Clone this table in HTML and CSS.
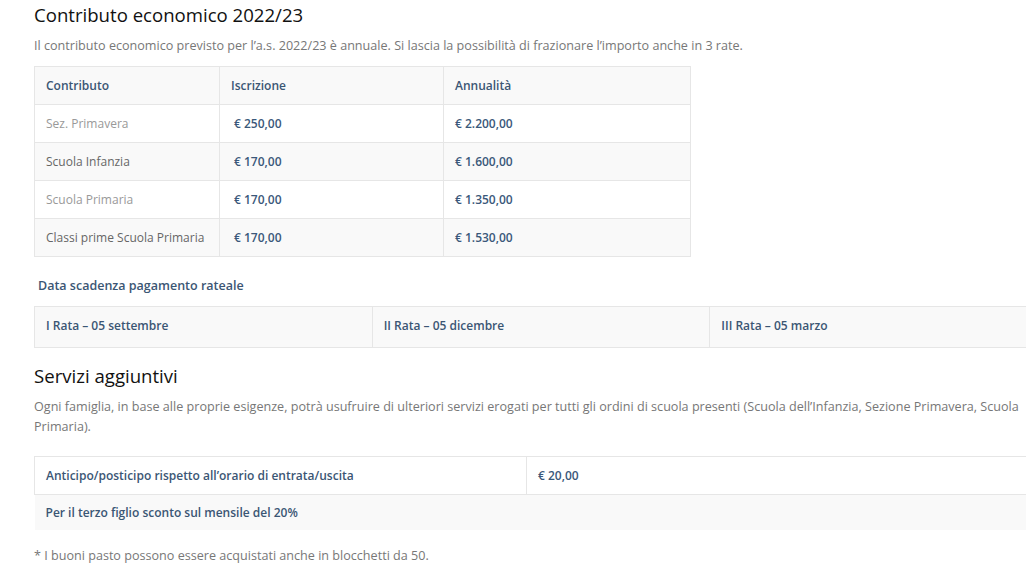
FILE: index.html
```html
<!DOCTYPE html>
<html lang="it">
<head>
<meta charset="UTF-8">
<meta name="viewport" content="width=device-width, initial-scale=1.0">
<title>Contributo economico 2022/23</title>
<link rel="stylesheet" href="styles.css">
</head>
<body>
<div class="content">
  <h2>Contributo economico 2022/23</h2>
  <p>Il contributo economico previsto per l’a.s. 2022/23 è annuale. Si lascia la possibilità di frazionare l’importo anche in 3 rate.</p>

  <table class="fees">
    <tr class="head">
      <td class="c1">Contributo</td>
      <td class="c2">Iscrizione</td>
      <td class="c3">Annualità</td>
    </tr>
    <tr>
      <td class="name light">Sez. Primavera</td>
      <td class="price fee">€ 250,00</td>
      <td class="price">€ 2.200,00</td>
    </tr>
    <tr>
      <td class="name">Scuola Infanzia</td>
      <td class="price fee">€ 170,00</td>
      <td class="price">€ 1.600,00</td>
    </tr>
    <tr>
      <td class="name light">Scuola Primaria</td>
      <td class="price fee">€ 170,00</td>
      <td class="price">€ 1.350,00</td>
    </tr>
    <tr>
      <td class="name">Classi prime Scuola Primaria</td>
      <td class="price fee">€ 170,00</td>
      <td class="price">€ 1.530,00</td>
    </tr>
  </table>

  <h4>Data scadenza pagamento rateale</h4>
  <table class="rates">
    <tr>
      <td>I Rata – 05 settembre</td>
      <td>II Rata – 05 dicembre</td>
      <td>III Rata – 05 marzo</td>
    </tr>
  </table>

  <h2 class="second">Servizi aggiuntivi</h2>
  <p>Ogni famiglia, in base alle proprie esigenze, potrà usufruire di ulteriori servizi erogati per tutti gli ordini di scuola presenti (Scuola dell’Infanzia, Sezione Primavera, Scuola Primaria).</p>

  <table class="extras">
    <tr>
      <td class="e1">Anticipo/posticipo rispetto all’orario di entrata/uscita</td>
      <td class="price">€ 20,00</td>
    </tr>
    <tr class="note-row">
      <td colspan="2">Per il terzo figlio sconto sul mensile del 20%</td>
    </tr>
  </table>

  <p class="note">* I buoni pasto possono essere acquistati anche in blocchetti da 50.</p>
</div>
</body>
</html>
```

FILE: styles.css
```css
html {
  overflow: hidden;
}
body {
  margin: 0;
  background: #fff;
  font-family: "Open Sans", "Liberation Sans", sans-serif;
}
.content {
  width: 1014px;
  padding-left: 34px;
}
h2 {
  margin: 0;
  padding-top: 4px;
  font-size: 18.6px;
  font-weight: 500;
  line-height: 22px;
  color: #111;
}
h2.second {
  padding-top: 17px;
}
p {
  margin: 10px 0 0;
  font-size: 12.6px;
  line-height: 20px;
  color: #777;
}
table {
  border-collapse: collapse;
  font-size: 12px;
  color: #3b5674;
}
td {
  border: 1px solid #e6e6e6;
  padding: 0 11px;
  height: 37px;
  font-weight: 600;
}
td.price {
  color: #3a587a;
}
td.fee {
  padding-left: 14px;
}
.fees {
  margin-top: 10px;
  width: 657px;
}
.fees tr:nth-child(odd) {
  background: #f9f9f9;
}
.fees .c1 {
  width: 162px;
}
.fees .c2 {
  width: 201px;
}
.name {
  font-weight: 400;
  color: #666;
}
.name.light {
  color: #999;
}
h4 {
  margin: 20px 0 0 4px;
  font-size: 12.5px;
  font-weight: 600;
  line-height: 18px;
  color: #3b5674;
}
.rates {
  margin-top: 11px;
  width: 1014px;
  background: #f9f9f9;
  table-layout: fixed;
}
.rates td {
  height: 37px;
  padding-bottom: 3px;
}
.extras {
  margin-top: 19px;
  width: 1014px;
}
.extras .e1 {
  width: 469px;
}
.note-row {
  background: #f9f9f9;
}
.note-row td {
  border-left: none;
  border-bottom: none;
  height: 35px;
}
.note {
  margin-top: 16px;
  font-weight: 400;
}
```
